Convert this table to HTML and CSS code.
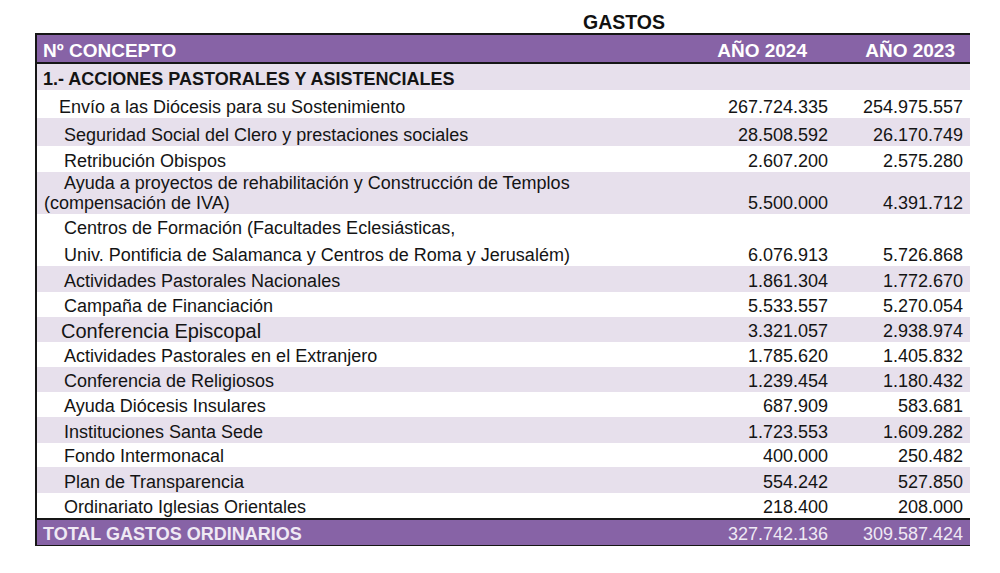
FILE: index.html
```html
<!DOCTYPE html>
<html lang="es">
<head>
<meta charset="utf-8">
<title>Gastos</title>
<link rel="stylesheet" href="styles.css">
</head>
<body>
<div class="page">
  <div class="title">GASTOS</div>
  <div class="sheet">
    <div class="row head">
      <div class="c">Nº CONCEPTO</div>
      <div class="n h24">AÑO 2024</div>
      <div class="n h23">AÑO 2023</div>
    </div>
    <div class="row alt h26 section">
      <div class="c">1.- ACCIONES PASTORALES Y ASISTENCIALES</div>
      <div class="n"></div>
      <div class="n"></div>
    </div>
    <div class="row h28">
      <div class="c i1">Envío a las Diócesis para su Sostenimiento</div>
      <div class="n">267.724.335</div>
      <div class="n">254.975.557</div>
    </div>
    <div class="row alt h28">
      <div class="c i2">Seguridad Social del Clero y prestaciones sociales</div>
      <div class="n">28.508.592</div>
      <div class="n">26.170.749</div>
    </div>
    <div class="row h26">
      <div class="c i2">Retribución Obispos</div>
      <div class="n">2.607.200</div>
      <div class="n">2.575.280</div>
    </div>
    <div class="row alt h42">
      <div class="c wrap"><span class="i2">Ayuda a proyectos de rehabilitación y Construcción de Templos</span><br>(compensación de IVA)</div>
      <div class="n">5.500.000</div>
      <div class="n">4.391.712</div>
    </div>
    <div class="row h52">
      <div class="c i2 lines"><span class="l1">Centros de Formación (Facultades Eclesiásticas,</span><span class="l2">Univ. Pontificia de Salamanca y Centros de Roma y Jerusalém)</span></div>
      <div class="n">6.076.913</div>
      <div class="n">5.726.868</div>
    </div>
    <div class="row alt h26">
      <div class="c i2">Actividades Pastorales Nacionales</div>
      <div class="n">1.861.304</div>
      <div class="n">1.772.670</div>
    </div>
    <div class="row h25">
      <div class="c i2">Campaña de Financiación</div>
      <div class="n">5.533.557</div>
      <div class="n">5.270.054</div>
    </div>
    <div class="row alt h25">
      <div class="c i3 big">Conferencia Episcopal</div>
      <div class="n">3.321.057</div>
      <div class="n">2.938.974</div>
    </div>
    <div class="row h25">
      <div class="c i2">Actividades Pastorales en el Extranjero</div>
      <div class="n">1.785.620</div>
      <div class="n">1.405.832</div>
    </div>
    <div class="row alt h25">
      <div class="c i2">Conferencia de Religiosos</div>
      <div class="n">1.239.454</div>
      <div class="n">1.180.432</div>
    </div>
    <div class="row h25">
      <div class="c i2">Ayuda Diócesis Insulares</div>
      <div class="n">687.909</div>
      <div class="n">583.681</div>
    </div>
    <div class="row alt h26">
      <div class="c i2">Instituciones Santa Sede</div>
      <div class="n">1.723.553</div>
      <div class="n">1.609.282</div>
    </div>
    <div class="row h24r">
      <div class="c i2">Fondo Intermonacal</div>
      <div class="n">400.000</div>
      <div class="n">250.482</div>
    </div>
    <div class="row alt h26">
      <div class="c i2">Plan de Transparencia</div>
      <div class="n">554.242</div>
      <div class="n">527.850</div>
    </div>
    <div class="row h25">
      <div class="c i2">Ordinariato Iglesias Orientales</div>
      <div class="n">218.400</div>
      <div class="n">208.000</div>
    </div>
    <div class="row total">
      <div class="c">TOTAL GASTOS ORDINARIOS</div>
      <div class="n">327.742.136</div>
      <div class="n">309.587.424</div>
    </div>
  </div>
</div>
</body>
</html>
```

FILE: styles.css
```css
html, body {
  margin: 0;
  padding: 0;
  background: #ffffff;
}

body {
  font-family: "Liberation Sans", Arial, sans-serif;
  color: #141414;
  width: 1000px;
  height: 573px;
  overflow: hidden;
}

.page {
  padding-top: 11px;
}

.title {
  font-weight: bold;
  font-size: 19.5px;
  line-height: 22px;
  height: 22px;
  padding-left: 583px;
  color: #111;
}

.sheet {
  margin-left: 35px;
  width: 933px;
  border-left: 2px solid #161616;
}

.row {
  display: grid;
  grid-template-columns: 1fr 145px 135px;
  align-items: end;
  font-size: 18px;
  line-height: 20px;
  background: #ffffff;
}

.row.alt {
  background: #e7e0ec;
}

.row > div {
  padding-bottom: 1px;
  white-space: nowrap;
}

.c {
  padding-left: 6px;
}

.n {
  text-align: right;
  padding-right: 7px;
  font-size: 18px;
}

.head {
  background: #8763a6;
  color: #ffffff;
  font-weight: bold;
  font-size: 19px;
  height: 27px;
  border-top: 2px solid #161616;
  border-bottom: 2px solid #161616;
}

.head > div {
  padding-bottom: 1px;
}

.head .n {
  font-size: 19px;
}

.head .h24 {
  padding-right: 28px;
}

.head .h23 {
  padding-right: 15px;
}

.section {
  font-weight: bold;
}

.h24r { height: 24px; }
.h25 { height: 25px; }
.h26 { height: 26px; }
.h28 { height: 28px; }
.h42 { height: 42px; }
.h52 { height: 52px; }

.i1 { padding-left: 22px; }
.i2 { padding-left: 27px; }
.wrap { padding-left: 7px; }
.wrap .i2 { padding-left: 20px; }
.i3 { padding-left: 24px; }

.big {
  font-size: 20px;
}

.lines {
  display: flex;
  flex-direction: column;
}

.lines .l2 {
  margin-top: 7px;
}

.total {
  background: #8763a6;
  color: #efe9f4;
  height: 25px;
  border-top: 2px solid #161616;
  border-bottom: 1px solid #161616;
}

.total .c {
  font-weight: bold;
}
```
